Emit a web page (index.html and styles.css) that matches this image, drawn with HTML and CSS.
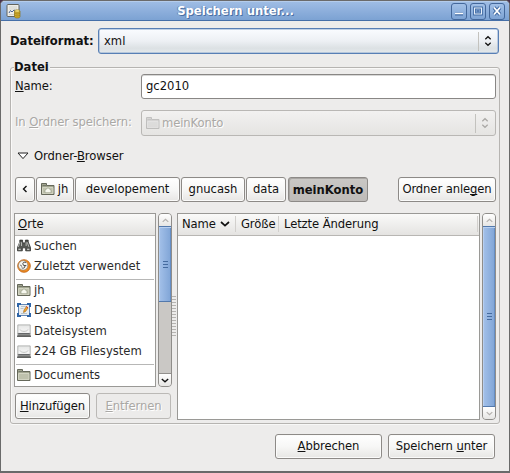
FILE: index.html
```html
<!DOCTYPE html>
<html lang="de">
<head>
<meta charset="utf-8">
<title>Speichern unter...</title>
<link rel="stylesheet" href="styles.css">
</head>
<body>
<svg class="defs" width="0" height="0">
  <defs>
    <linearGradient id="metal" x1="0" y1="0" x2="0" y2="1"><stop offset="0" stop-color="#e4e5e4"/><stop offset="1" stop-color="#fafafa"/></linearGradient>
    <symbol id="updown" viewBox="0 0 8 12"><path d="M1.300 4.300 4 1.700l2.700 2.600M1.300 7.700 4 10.300l2.700-2.600" fill="none" stroke="currentColor" stroke-width="1.200"/></symbol>
    <symbol id="chev" viewBox="0 0 10 6"><path d="M1 1l4 3.600L9 1" fill="none" stroke="currentColor" stroke-width="1.700"/></symbol>
    <symbol id="folder" viewBox="0 0 14 14"><path d="M.5 12.500v-11h5v2h7.500v9z" fill="#a2a690" stroke="#65685a"/><path d="M1.500 11.500v-6h10.500v6z" fill="#bec1ac" stroke="#dadccb" stroke-width=".8"/><path d="M1.500 3.500h3.500" stroke="#74786a"/></symbol>
    <symbol id="home" viewBox="0 0 14 14"><use href="#folder"/><path d="M4 8.200l3-2.500 3 2.500v2.500H4z" fill="#f7f8ef" stroke="#8e937f" stroke-width=".6"/></symbol>
    <symbol id="disk" viewBox="0 0 14 13"><path d="M.8.900h12.400v8.500H.8z" fill="url(#metal)" stroke="#a1a3a1" stroke-width=".8"/><path d="M3 5.500c1 2.500 7 2.500 8 0" fill="none" stroke="#c4c6c4"/><path d="M.5 9h13v3.500H.5z" fill="#8b8d8b"/><path d="M0 12.200h14" stroke="#343634"/><path d="M1.500 9.500h11" stroke="#55575a" stroke-width=".7"/></symbol>
  </defs>
</svg>
<div class="window">
  <header class="titlebar">
    <svg class="app" width="16" height="16" viewBox="0 0 16 16"><rect x="1" y="1.500" width="12" height="12" rx="1" fill="#eeeee9" stroke="#62635d"/><path d="M3 4h8M3 6h8M3 11.500h6" stroke="#c5c6be" stroke-width=".7"/><path d="M3 10l1.500-2.500L6 9l2-2 2 1" fill="none" stroke="#4a6290"/><path d="M8.500 8v5.500c0 2 5.500 2 5.500 0V8z" fill="#d3ad29" stroke="#8b731b" stroke-width=".7"/><ellipse cx="11.200" cy="8" rx="2.700" ry="1.300" fill="#f2dd74" stroke="#8b731b" stroke-width=".5"/><path d="M8.500 10c1 1.300 4.500 1.300 5.500 0M8.500 12c1 1.300 4.500 1.300 5.500 0" fill="none" stroke="#8b731b" stroke-width=".6"/></svg>
    <span class="caption">Speichern unter...</span>
    <span class="controls">
      <span class="ctl"><svg width="14" height="14" viewBox="0 0 14 14"><path d="M3 10h8" stroke="#416aa3" stroke-width="3"/><path d="M3 9.500h8" stroke="#fff" stroke-width="1.600"/></svg></span>
      <span class="ctl"><svg width="14" height="14" viewBox="0 0 14 14"><path d="M3.500 4h7v6h-7z" fill="none" stroke="#416aa3" stroke-width="2.800"/><path d="M3.500 4h7v6h-7z" fill="none" stroke="#e6effb" stroke-width="1.100"/><path d="M5.500 7h3" stroke="#416aa3" stroke-width="1.500"/></svg></span>
      <span class="ctl"><svg width="14" height="14" viewBox="0 0 14 14"><path d="M4 3.500l6 7m0-7l-6 7" stroke="#416aa3" stroke-width="3.600"/><path d="M4 3.500l6 7m0-7l-6 7" stroke="#fff" stroke-width="1.800"/></svg></span>
    </span>
  </header>
  <main class="content">
    <div class="format"><b class="format-label">Dateiformat:</b>
      <div class="combo active"><span>xml</span><span class="arrows"><svg width="8" height="12"><use href="#updown"/></svg></span></div>
    </div>
    <section class="group">
      <b class="legend">Datei</b>
      <div class="field"><span class="field-label"><u>N</u>ame:</span><div class="entry">gc2010</div></div>
      <div class="field disabled"><span class="field-label">In <u>O</u>rdner speichern:</span>
        <div class="combo"><svg class="faded" width="14" height="14"><use href="#folder"/></svg><span class="combo-text">meinKonto</span><span class="arrows"><svg width="8" height="12"><use href="#updown"/></svg></span></div>
      </div>
      <div class="expander"><svg width="12" height="8" viewBox="0 0 12 8"><path d="M1 1h10L6 6.600z" fill="#fff" stroke="#222"/></svg><span>Ordner-<u>B</u>rowser</span></div>
      <div class="path">
        <div class="btn back"><svg width="6" height="8" viewBox="0 0 6 8"><path d="M4.500 1L1.500 4l3 3" fill="none" stroke="#111" stroke-width="1.400"/></svg></div>
        <div class="btn p-home"><svg width="14" height="14"><use href="#home"/></svg>jh</div>
        <div class="btn p-dev">developement</div>
        <div class="btn p-gnu">gnucash</div>
        <div class="btn p-data">data</div>
        <div class="btn p-current">meinKonto</div>
        <div class="btn create"><span>Ordner anle<u>g</u>en</span></div>
      </div>
      <div class="browser">
        <div class="side">
          <div class="side-top">
            <div class="list places">
              <div class="head"><span><u>O</u>rte</span></div>
              <div class="row"><svg width="14" height="14" viewBox="0 0 15 14"><path d="M3 .7h3v2l.7 1h1.600l.7-1v-2h3v2l2.500 6v3.500H9.300V9H5.700v3.200H.5V8.700L3 2.700z" fill="#555753" stroke="#252724" stroke-width=".8"/><path d="M3 3l-1.500 5M11 3l1.800 5M4.800 3v4M9.800 3v4" stroke="#c1c3bf"/><path d="M1.500 10.500H4M10.800 10.500h2.500" stroke="#eee"/></svg>Suchen</div>
              <div class="row"><svg width="14" height="14" viewBox="0 0 15 15"><circle cx="7.500" cy="7.500" r="6.800" fill="#ef8c23" stroke="#ba5d0c" stroke-width=".8"/><circle cx="6.600" cy="6.900" r="5" fill="#f8f7f1" stroke="#777" stroke-width=".6"/><path d="M9.500 3.800C7 3 6 4 6.300 5.500S9 7 8.500 8.500 6 10 5 9.500M3.500 6.500l2 1.500M7 7h3" fill="none" stroke="#444"/></svg>Zuletzt verwendet</div>
              <div class="sep"></div>
              <div class="row"><svg width="14" height="14"><use href="#home"/></svg>jh</div>
              <div class="row"><svg width="14" height="14" viewBox="0 0 14 14"><path d="M1.500 1.500h11v11h-11z" fill="#e9edf0" stroke="#6387b5"/><path d="M0 0h4v2H2v2H0zM10 0h4v4h-2V2h-2zM0 10h2v2h2v2H0zM12 10h2v4h-4v-2h2z" fill="#2e65a8"/><path d="M4 3.500h5M3.500 5.500h3M4 10.500h6" stroke="#b7c4cc"/><path d="M6.500 9.500l.5-2.500L9.500 3.500 11 5 8.500 8.500z" fill="#f3a42d" stroke="#9c6417" stroke-width=".6"/><path d="M9.500 3.300L11 5" stroke="#d33b2c"/></svg>Desktop</div>
              <div class="row"><svg width="14" height="13"><use href="#disk"/></svg>Dateisystem</div>
              <div class="row"><svg width="14" height="13"><use href="#disk"/></svg>224 GB Filesystem</div>
              <div class="sep"></div>
              <div class="row"><svg width="14" height="14"><use href="#folder"/></svg>Documents</div>
            </div>
            <div class="scroll"><div class="step up off"><svg width="7" height="5"><use href="#chev"/></svg></div><div class="thumb short"><i></i><i></i><i></i></div><div class="trough"></div><div class="step down"><svg width="8" height="5"><use href="#chev"/></svg></div></div>
          </div>
          <div class="side-actions"><div class="btn"><span><u>H</u>inzufügen</span></div><div class="btn off"><span><u>E</u>ntfernen</span></div></div>
        </div>
        <div class="grip"></div>
        <div class="list files">
          <div class="head cols"><span class="c-name">Name<svg width="10" height="6"><use href="#chev"/></svg></span><span class="c-size">Größe</span><span class="c-date">Letzte Änderung</span></div>
        </div>
        <div class="scroll main"><div class="step up off"><svg width="7" height="5"><use href="#chev"/></svg></div><div class="thumb"><i></i><i></i><i></i></div><div class="step down off"><svg width="7" height="5"><use href="#chev"/></svg></div></div>
      </div>
    </section>
    <footer class="actions"><div class="btn"><span><u>A</u>bbrechen</span></div><div class="btn"><span>Speichern <u>u</u>nter</span></div></footer>
  </main>
</div>
</body>
</html>
```
FILE: styles.css
```css
* { box-sizing: border-box; }
body { margin: 0; background: #49314c; font: 11.6px/16px "DejaVu Sans", sans-serif; color: #111; overflow: hidden; white-space: nowrap; }
.defs { position: absolute; }
svg { display: block; flex: none; }
u { text-decoration: underline; text-decoration-thickness: 1px; text-underline-offset: 1px; text-decoration-skip-ink: none; }
.window { width: 510px; height: 473px; border: 1px solid #6a6a6a; border-bottom-width: 2px; border-radius: 5px 5px 0 0; background: #edeceb; display: flex; flex-direction: column; overflow: hidden; }
.titlebar { height: 20px; flex: none; display: grid; grid-template-columns: 20px 1fr 60px; align-items: center; background: linear-gradient(#9ebce4, #7ca2d3); border-top: 1px solid #b4cceb; border-bottom: 1px solid #456fa8; padding: 0 4px 0 5px; }
.caption { text-align: center; color: #fff; font-weight: bold; text-shadow: 1px 1px #4c70a4, -1px 0 #6285b6; margin-top: -1px; }
.controls { display: flex; gap: 3px; justify-content: flex-end; }
.ctl { width: 16px; height: 17px; border: 1px solid #44689b; border-radius: 3px; background: linear-gradient(#a2c0e7, #7da3d4); display: grid; place-items: center; }
.content { flex: 1; padding: 7px 10px 0 9px; }
.format { display: flex; height: 26px; align-items: center; }
.format-label { width: 88px; flex: none; }
.combo { flex: 1; height: 26px; border: 1px solid #999; border-radius: 3px; display: flex; align-items: center; padding-left: 4px; background: linear-gradient(#f2f1f0, #e5e4e2); }
.combo.active { border-color: #587fb5; box-shadow: inset 0 0 0 .5px #88a5cc; padding-left: 5px; background: linear-gradient(#fafcff, #edf0f4 50%, #dce1e4 80%, #e4e8eb); }
.arrows { margin-left: auto; width: 20px; height: 19px; border-left: 1px solid #c3c2be; display: grid; place-items: center; padding-right: 2px; }
.group { margin-top: 13px; border: 1px solid #b6b4b1; border-radius: 3px; height: 357px; width: 490px; padding: 0 3px 0 4px; box-shadow: inset 1px 1px #faf9f8, 0 1px #f8f8f7; }
.legend { display: block; width: max-content; height: 16px; margin: -9px 0 -1px -1px; padding-right: 1px; background: #edeceb; }
.field { display: flex; align-items: center; }
.field-label { width: 126px; flex: none; margin-top: -2px; letter-spacing: -.1px; }
.entry { flex: 1; height: 25px; border: 1px solid #898785; border-radius: 3px; background: #fff; box-shadow: inset 0 1px #d8d8d7; padding: 3px 4px; }
.disabled { margin-top: 11px; color: #aaa8a5; text-shadow: 1px 1px #fff; }
.disabled .combo { border-color: #b9b7b4; }
.combo-text { margin-left: 2px; letter-spacing: -.1px; }
.faded { opacity: .32; filter: grayscale(1); }
.expander { display: flex; align-items: center; gap: 5px; margin: 12px 0 0 2px; height: 16px; letter-spacing: -.06px; }
.path { display: flex; gap: 1px; margin: 13px 0 0; height: 25px; }
.btn { border: 1px solid #8d8a87; border-radius: 3px; background: linear-gradient(#fff, #f7f7f6 50%, #e7e6e4); box-shadow: inset 0 0 0 1px #fbfbfa; display: flex; align-items: center; justify-content: center; padding-bottom: 1px; }
.back { width: 20px; }
.p-home { width: 38px; gap: 3px; padding-right: 1px; }
.p-dev { width: 105px; }
.p-gnu { width: 64px; }
.p-data { width: 40px; }
.p-current { width: 80px; margin-left: 1px; font-weight: bold; background: linear-gradient(#cac8c5, #bebbb8); box-shadow: inset 1px 1px #a9a6a3; padding: 1px 0 0; }
.create { width: 98px; margin-left: auto; letter-spacing: -.1px; }
.browser { display: flex; margin: 11px 0 0 -1px; height: 207px; }
.side { width: 158px; flex: none; }
.side-top { display: flex; gap: 2px; height: 174px; }
.list { background: #fff; border: 1px solid #9a9996; }
.places { width: 142px; }
.head { height: 22px; padding: 2px 3px; background: linear-gradient(#fafaf9, #e4e3e1); border-bottom: 1px solid #b8b6b3; color: #111; }
.places .head { height: 21.5px; }
.row { height: 20.5px; padding-left: 2px; display: flex; align-items: center; color: #2b2b2b; }
.row svg { width: 14px; margin-right: 3px; }
.sep { height: 3px; margin: 0 1px; border-bottom: 1px solid #b7b7b6; }
.scroll { width: 14px; display: flex; flex-direction: column; border: 1px solid #8f8d8a; border-radius: 4px; background: #cac8c5; overflow: hidden; }
.step { height: 12px; flex: none; display: grid; place-items: center; background: linear-gradient(#fff, #e7e6e4); }
.up svg { transform: rotate(180deg); }
.step.off { color: #b4b1ae; }
.thumb { flex: 1; border: solid #5379ac; border-width: 1px 0; box-shadow: inset 1px 1px #b7cff0, inset -1px 0 #668ec4; background: linear-gradient(90deg, #a4c1e9, #7fa4d6); display: flex; flex-direction: column; align-items: center; justify-content: center; gap: 2px; }
.thumb i { width: 5px; height: 1px; background: #456b9f; }
.short { flex: none; height: 76px; }
.trough { flex: 1; border-bottom: 1px solid #92908d; }
.side-actions { display: flex; gap: 6px; margin: 6px 0 0 1px; letter-spacing: -.08px; }
.side-actions .btn { width: 75px; height: 26px; }
.btn.off { border-color: #bbb9b6; color: #aaa8a5; text-shadow: 1px 1px #fff; background: #ecebea; box-shadow: none; }
.grip { width: 4px; height: 41px; margin-top: 82px; background: radial-gradient(circle, #b5b3b0 .6px, transparent .9px) 0 0 / 2px 3px; }
.files { width: 304px; margin-left: 1px; }
.cols { display: flex; padding: 2px 0; letter-spacing: -.1px; }
.c-name { width: 58px; padding-left: 4px; display: flex; align-items: center; gap: 4px; border-right: 1px solid #d2d0cd; height: 16px; }
.c-size { width: 43px; padding-left: 5px; border-right: 1px solid #d2d0cd; height: 16px; }
.c-date { flex: 1; padding-left: 5px; border-right: 1px solid #d2d0cd; height: 16px; margin-right: 1px; }
.scroll.main { margin-left: 2px; }
.actions { display: flex; gap: 6px; justify-content: flex-end; margin: 10px 4px 0 0; letter-spacing: -.08px; }
.actions .btn { width: 107px; height: 25px; }
```
